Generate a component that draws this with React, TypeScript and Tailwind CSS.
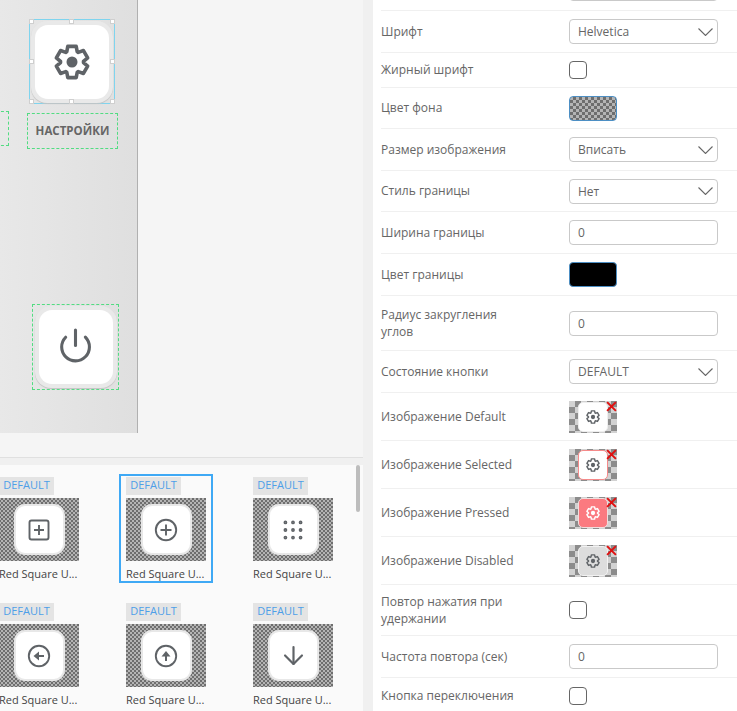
import { ArrowDown, Grip, Power } from "lucide-react"
import type { ReactNode } from "react"

const checkerFine = "bg-[repeating-conic-gradient(#6e6e6e_0_25%,#b4b4b4_0_50%)] bg-[length:4px_4px]"
const checkerWide = "bg-[repeating-conic-gradient(#8c8c8c_0_25%,#d2d2d2_0_50%)] bg-[length:12px_12px]"

// six square teeth, the same outline the reference cog has
const gearPath =
  [0, 60, 120, 180, 240, 300]
    .map((deg, i) => {
      const pt = (r: number, off: number) => {
        const a = ((deg - 90 + off) * Math.PI) / 180
        return `${(18 + r * Math.cos(a)).toFixed(2)} ${(18 + r * Math.sin(a)).toFixed(2)}`
      }
      return `${i === 0 ? "M" : "L"}${pt(11.5, -27)} L${pt(16.2, -15)} L${pt(16.2, 15)} L${pt(11.5, 27)}`
    })
    .join(" ") + " Z"

function Gear({ size, stroke = 3.6 }: { size: number; stroke?: number }) {
  return (
    <svg viewBox="0 0 36 36" width={size} height={size} fill="none">
      <path d={gearPath} stroke="currentColor" strokeWidth={stroke} strokeLinejoin="round" />
      <circle cx="18" cy="18" r="5.5" fill="currentColor" />
    </svg>
  )
}

function CircleIcon({ children }: { children: ReactNode }) {
  return (
    <svg viewBox="0 0 24 24" width={24} height={24} fill="none">
      <circle cx="12" cy="12" r="10.2" stroke="currentColor" strokeWidth="1.9" />
      {children}
    </svg>
  )
}

function Handle({ className }: { className: string }) {
  return <span className={`absolute w-[5px] h-[5px] bg-white border border-[#cfcfcf] ${className}`} />
}

function CanvasButton({ children }: { children: ReactNode }) {
  return (
    <div className="w-[82px] h-[82px] rounded-[16px] bg-[#e9e9e9] shadow-[0_1px_1px_#c4c4c4] p-[4px] flex">
      <div className="flex-1 rounded-[13px] bg-white flex items-center justify-center text-[#5f6367]">{children}</div>
    </div>
  )
}

function Canvas() {
  return (
    <div className="relative w-[138px] h-full border-r border-[#b0b0b0] bg-gradient-to-r from-[#e8e8e8] to-[#dfdfdf]">
      <div className="absolute left-[-80px] top-[111px] w-[89px] h-[35px] border border-dashed border-[#52dc82]" />
      <div className="absolute left-[29px] top-[19px] w-[86px] h-[85px] border border-[#7fd4ee] flex items-center justify-center">
        <CanvasButton>
          <Gear size={36} />
        </CanvasButton>
        <Handle className="left-[-1px] top-[-1px]" />
        <Handle className="left-[39px] top-[-1px]" />
        <Handle className="right-[-1px] top-[-1px]" />
        <Handle className="left-[-1px] top-[39px]" />
        <Handle className="right-[-1px] top-[39px]" />
        <Handle className="left-[-1px] bottom-[-1px]" />
        <Handle className="left-[39px] bottom-[-1px]" />
        <Handle className="right-[-1px] bottom-[-1px]" />
      </div>
      <div className="absolute left-[27px] top-[113px] w-[91px] h-[36px] border border-dashed border-[#52dc82] flex items-center justify-center text-[11.5px] font-bold text-[#666]">
        НАСТРОЙКИ
      </div>
      <div className="absolute left-[32px] top-[304px] w-[87px] h-[86px] border border-dashed border-[#52dc82] flex items-center justify-center">
        <CanvasButton>
          <Power size={37} strokeWidth={2} className="mb-[3px]" />
        </CanvasButton>
      </div>
    </div>
  )
}

const tiles: { icon: ReactNode; selected: boolean }[] = [
  {
    icon: (
      <svg viewBox="0 0 24 24" width={24} height={24} fill="none" stroke="currentColor" strokeWidth="1.9">
        <rect x="2.5" y="2.5" width="19" height="19" rx="2" />
        <path d="M12 7v10M7 12h10" />
      </svg>
    ),
    selected: false,
  },
  {
    icon: (
      <CircleIcon>
        <path d="M12 6.5v11M6.5 12h11" stroke="currentColor" strokeWidth="1.9" />
      </CircleIcon>
    ),
    selected: true,
  },
  { icon: <Grip size={26} strokeWidth={1.5} />, selected: false },
  {
    icon: (
      <CircleIcon>
        <path d="M6.5 12 12 7.5v9Z" fill="currentColor" />
        <path d="M11 12h6" stroke="currentColor" strokeWidth="2" />
      </CircleIcon>
    ),
    selected: false,
  },
  {
    icon: (
      <CircleIcon>
        <path d="M12 7 7.5 12.5h9Z" fill="currentColor" />
        <path d="M12 12v5" stroke="currentColor" strokeWidth="2" />
      </CircleIcon>
    ),
    selected: false,
  },
  { icon: <ArrowDown size={29} strokeWidth={1.8} />, selected: false },
]

function Tile({ icon, selected }: { icon: ReactNode; selected: boolean }) {
  return (
    <div className={`w-[94px] h-[109px] border-2 pl-[5px] pt-[1px] ${selected ? "border-[#3fa9f5]" : "border-transparent"}`}>
      <div className="w-[55px] h-[18px] bg-[#e4e4e4] text-[#4d9fe8] text-[11px] leading-[16px] text-center">DEFAULT</div>
      <div className={`w-[80px] h-[63px] mt-[3px] flex items-center justify-center ${checkerFine}`}>
        <div className="w-[51px] h-[51px] rounded-[11px] bg-white border-2 border-[#e8e8e8] flex items-center justify-center text-[#5f6367]">
          {icon}
        </div>
      </div>
      <div className="text-[11px] leading-[14px] mt-[6px] text-[#444] whitespace-nowrap">Red Square U...</div>
    </div>
  )
}

function Palette() {
  return (
    <div className="relative h-[246px] bg-[#fafafa] overflow-hidden pt-[9px]">
      <div className="grid grid-cols-[94px_94px_94px] gap-x-[33px] gap-y-[17px] ml-[-8px]">
        {tiles.map((t, i) => (
          <Tile key={i} icon={t.icon} selected={t.selected} />
        ))}
      </div>
      <div className="absolute right-[3px] top-0 w-[4px] h-[47px] rounded-full bg-[#bdbdbd]" />
    </div>
  )
}

function SelectBox({ value }: { value: string }) {
  return (
    <div className="w-[149px] h-[25px] shrink-0 rounded-[4px] border border-[#c9c9c9] bg-white pl-[8px] pr-[4px] flex items-center justify-between text-[#666]">
      <span>{value}</span>
      <svg viewBox="0 0 15 8" width={15} height={8} fill="none" stroke="#666" strokeWidth="1.1">
        <path d="M.5.5l7 7 7-7" />
      </svg>
    </div>
  )
}

function InputBox({ value }: { value: string }) {
  return (
    <div className="w-[149px] h-[25px] rounded-[4px] border border-[#c9c9c9] bg-white pl-[8px] flex items-center text-[#666]">{value}</div>
  )
}

function CheckBox() {
  return <div className="w-[18px] h-[18px] rounded-[4px] border border-[#666] bg-white" />
}

function ImagePreview({ kind }: { kind: "default" | "selected" | "pressed" | "disabled" }) {
  const inner = {
    default: "bg-white border-[#eeeeee] text-[#5f6367]",
    selected: "bg-white border-[#f58a8a] text-[#5f6367]",
    pressed: "bg-[#fb7a80] border-[#f0dede] text-white",
    disabled: "bg-[#dddddd] border-[#f2f2f2] text-[#5f6367]",
  }[kind]
  return (
    <div className={`relative w-[48px] h-[32px] flex items-center justify-center ${checkerWide}`}>
      <div className={`w-[30px] h-[30px] rounded-[5px] border flex items-center justify-center ${inner}`}>
        <Gear size={14} stroke={3.6} />
      </div>
      <svg viewBox="0 0 10 10" className="absolute right-0 top-0 w-[11px] h-[11px] text-[#e01010]">
        <path d="M1 1 9 9M9 1 1 9" stroke="currentColor" strokeWidth="1.8" />
      </svg>
    </div>
  )
}

const rows: { label: string; h: string; control: ReactNode }[] = [
  { label: "Шрифт", h: "h-[42px]", control: <SelectBox value="Helvetica" /> },
  { label: "Жирный шрифт", h: "h-[35px]", control: <CheckBox /> },
  {
    label: "Цвет фона",
    h: "h-[41px]",
    control: <div className="w-[48px] h-[25px] rounded-[4px] border border-[#4d8fc4] bg-[repeating-conic-gradient(#6e6e6e_0_25%,#b4b4b4_0_50%)] bg-[length:6px_6px]" />,
  },
  { label: "Размер изображения", h: "h-[42px]", control: <SelectBox value="Вписать" /> },
  { label: "Стиль границы", h: "h-[41px]", control: <SelectBox value="Нет" /> },
  { label: "Ширина границы", h: "h-[42px]", control: <InputBox value="0" /> },
  {
    label: "Цвет границы",
    h: "h-[42px]",
    control: <div className="w-[48px] h-[25px] rounded-[4px] border border-[#4d8fc4] bg-black" />,
  },
  { label: "Радиус закругления углов", h: "h-[55px]", control: <InputBox value="0" /> },
  { label: "Состояние кнопки", h: "h-[42px]", control: <SelectBox value="DEFAULT" /> },
  { label: "Изображение Default", h: "h-[48px]", control: <ImagePreview kind="default" /> },
  { label: "Изображение Selected", h: "h-[48px]", control: <ImagePreview kind="selected" /> },
  { label: "Изображение Pressed", h: "h-[48px]", control: <ImagePreview kind="pressed" /> },
  { label: "Изображение Disabled", h: "h-[48px]", control: <ImagePreview kind="disabled" /> },
  { label: "Повтор нажатия при удержании", h: "h-[51px]", control: <CheckBox /> },
  { label: "Частота повтора (сек)", h: "h-[42px]", control: <InputBox value="0" /> },
  { label: "Кнопка переключения", h: "h-[36px]", control: <CheckBox /> },
]

function Properties() {
  return (
    <div className="w-[364px] h-full bg-white pl-[8px] text-[12px] leading-[17px] text-[#666] overflow-hidden">
      <div className="h-[11px] border-b border-[#f0f0f0] flex items-end pb-[9px] pl-[188px]">
        <SelectBox value="" />
      </div>
      {rows.map((r, i) => (
        <div key={r.label} className={`${r.h} flex items-center ${i < rows.length - 1 ? "border-b border-[#f0f0f0]" : ""}`}>
          <div className="w-[188px] pr-[48px] shrink-0 mt-[-1px]">{r.label}</div>
          {r.control}
        </div>
      ))}
    </div>
  )
}

export default function App() {
  return (
    <div className="w-[737px] h-[711px] overflow-hidden flex bg-[#f0f0f0] font-['Open_Sans',sans-serif]">
      <div className="w-[363px] shrink-0 flex flex-col bg-[#f5f5f5]">
        <div className="h-[433px] shrink-0 flex">
          <Canvas />
        </div>
        <div className="h-[25px] shrink-0 border-b border-[#e0e0e0]" />
        <div className="h-[7px] shrink-0 bg-[#f0f0f0]" />
        <Palette />
      </div>
      <div className="w-[10px] shrink-0" />
      <Properties />
    </div>
  )
}
